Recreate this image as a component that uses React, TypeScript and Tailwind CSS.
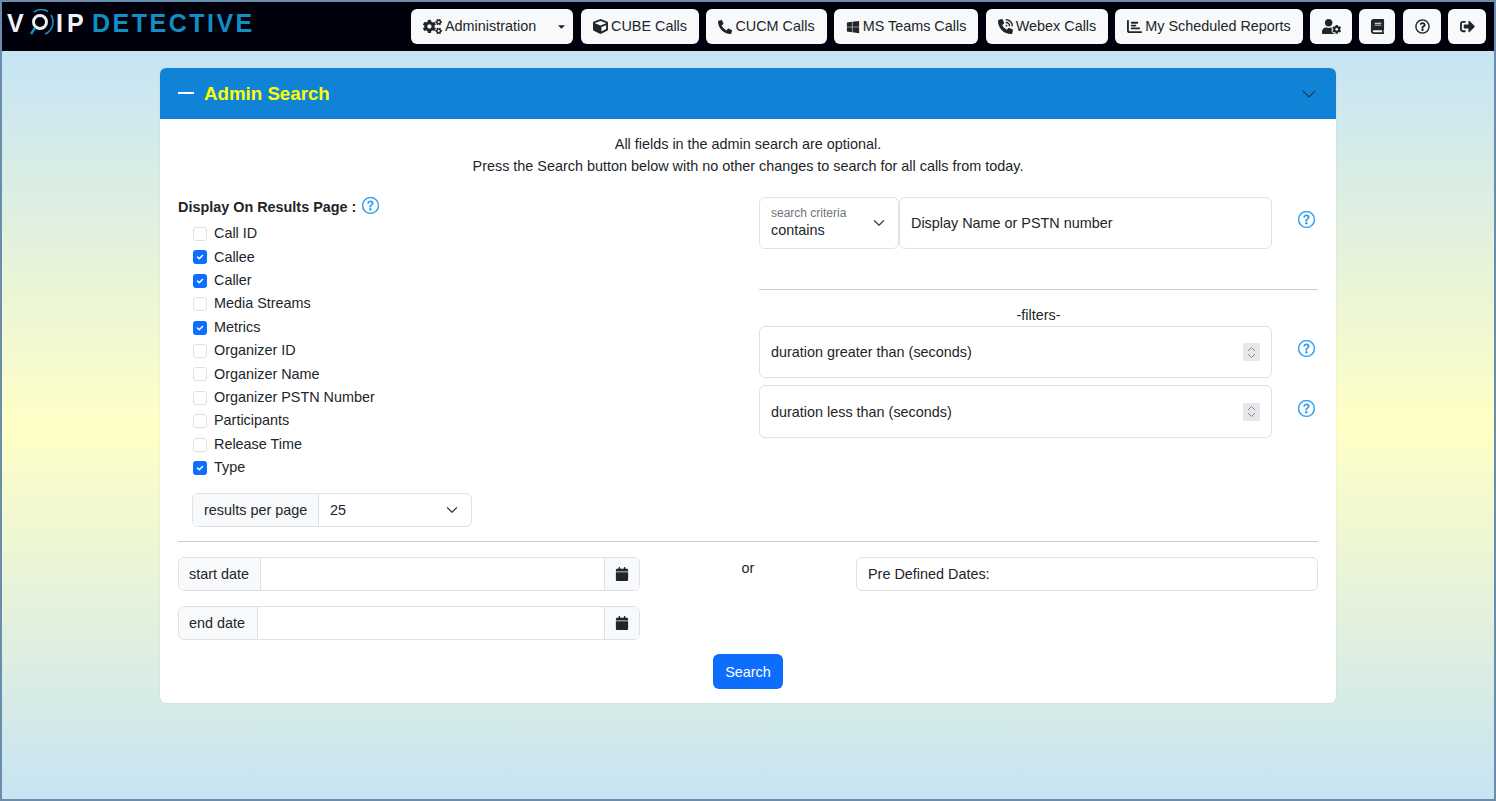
import React from 'react';
import { FaCogs, FaCube, FaPhoneAlt, FaWindows, FaUserCog, FaBook, FaRegQuestionCircle, FaSignOutAlt, FaCaretDown } from 'react-icons/fa';
import { FaChartBar, FaCalendar, FaPhoneVolume } from 'react-icons/fa6';
import { BsQuestionCircle, BsChevronDown } from 'react-icons/bs';

const NAV_BTN = 'h-[35px] bg-[#f8f9fa] rounded-md flex items-center justify-center text-[14.4px] text-[#212529] shrink-0';

const columns = [
  { label: 'Call ID', on: false },
  { label: 'Callee', on: true },
  { label: 'Caller', on: true },
  { label: 'Media Streams', on: false },
  { label: 'Metrics', on: true },
  { label: 'Organizer ID', on: false },
  { label: 'Organizer Name', on: false },
  { label: 'Organizer PSTN Number', on: false },
  { label: 'Participants', on: false },
  { label: 'Release Time', on: false },
  { label: 'Type', on: true },
];

function Logo() {
  return (
    <div className="flex items-center h-full pl-[5px] pb-[7px] font-bold text-[25px] leading-none select-none">
      <span className="text-[#f2f2f2] w-[21px]">V</span>
      <svg width="30" height="34" viewBox="0 0 30 34" className="mt-[6px] shrink-0">
        <circle cx="12" cy="13" r="6.5" fill="none" stroke="#eeeeee" strokeWidth="3" />
        <path d="M6 3 A12.5 12.5 0 0 1 20 2.5" fill="none" stroke="#1390c4" strokeWidth="1.6" />
        <path d="M23 6 A13 13 0 0 1 17 25" fill="none" stroke="#1390c4" strokeWidth="1.6" />
        <path d="M7 19 L3 25" fill="none" stroke="#1390c4" strokeWidth="2.4" />
      </svg>
      <span className="text-[#f2f2f2] tracking-[4px] ml-[-2px] w-[38px]">IP</span>
      <span className="text-[#0f8fc4] tracking-[2.5px] ml-[-2px]">DETECTIVE</span>
    </div>
  );
}

function Navbar() {
  return (
    <nav className="h-[49px] bg-[#00000c] flex items-center justify-between shrink-0">
      <Logo />
      <div className="flex items-center mr-[8px]">
        <div className={`${NAV_BTN} w-[162px] justify-start pl-[12px] gap-[3px]`}>
          <FaCogs size={19} />
          <span>Administration</span>
          <FaCaretDown size={11} className="ml-[17px]" />
        </div>
        <div className={`${NAV_BTN} w-[118px] gap-[3px] ml-[8px]`}><FaCube size={15} />CUBE Calls</div>
        <div className={`${NAV_BTN} w-[121px] gap-[3px] ml-[7px]`}><FaPhoneAlt size={14} />CUCM Calls</div>
        <div className={`${NAV_BTN} w-[144px] gap-[3px] ml-[7px]`}><FaWindows size={14} />MS Teams Calls</div>
        <div className={`${NAV_BTN} w-[122px] gap-[3px] ml-[8px]`}><FaPhoneVolume size={15} />Webex Calls</div>
        <div className={`${NAV_BTN} w-[188px] gap-[3px] ml-[7px]`}><FaChartBar size={15} />My Scheduled Reports</div>
        <div className={`${NAV_BTN} w-[42px] ml-[7px]`}><FaUserCog size={19} /></div>
        <div className={`${NAV_BTN} w-[36px] ml-[7px]`}><FaBook size={15} /></div>
        <div className={`${NAV_BTN} w-[38px] ml-[8px]`}><FaRegQuestionCircle size={15} /></div>
        <div className={`${NAV_BTN} w-[38px] ml-[7px]`}><FaSignOutAlt size={15} /></div>
      </div>
    </nav>
  );
}

function Help({ className = '' }: { className?: string }) {
  return <BsQuestionCircle size={17} className={`text-[#2b9bf0] stroke-[0.4px] shrink-0 ${className}`} />;
}

function Check({ label, on }: { label: string; on: boolean }) {
  return (
    <label className="flex items-center h-[23.4px] pl-[15px]">
      {on ? (
        <span className="w-[14px] h-[14px] rounded-[3px] bg-[#0d6efd] flex items-center justify-center">
          <svg width="10" height="10" viewBox="0 0 20 20">
            <path d="M5 10l3.5 3.5L15 7" fill="none" stroke="#fff" strokeWidth="3" strokeLinecap="round" strokeLinejoin="round" />
          </svg>
        </span>
      ) : (
        <span className="w-[14px] h-[14px] rounded-[3px] border border-[#dee2e6] bg-white" />
      )}
      <span className="ml-[7px] text-[14.4px] text-[#212529]">{label}</span>
    </label>
  );
}

function Spinner() {
  return (
    <div className="w-[17px] h-[18px] bg-[#e6e6eb] flex flex-col items-center justify-center gap-[1px] shrink-0">
      <svg width="9" height="6" viewBox="0 0 9 6"><path d="M1 5l3.5-3.5L8 5" fill="none" stroke="#8a8a8f" strokeWidth="1" /></svg>
      <svg width="9" height="6" viewBox="0 0 9 6"><path d="M1 1l3.5 3.5L8 1" fill="none" stroke="#8a8a8f" strokeWidth="1" /></svg>
    </div>
  );
}

function NumberField({ label, className = '' }: { label: string; className?: string }) {
  return (
    <div className={`flex items-center gap-[26px] ${className}`}>
      <div className="w-[513px] shrink-0 border border-[#dee2e6] rounded-md flex items-center justify-between pl-[11px] pr-[11px] h-full text-[14.4px] text-[#212529]">
        <span className="pt-[2px]">{label}</span>
        <Spinner />
      </div>
      <Help className="mt-[-7px]" />
    </div>
  );
}

function DateField({ label, labelWidth, className = '' }: { label: string; labelWidth: string; className?: string }) {
  return (
    <div className={`flex w-[462px] h-[34px] border border-[#dee2e6] rounded-md overflow-hidden text-[14.4px] text-[#212529] ${className}`}>
      <div className={`${labelWidth} bg-[#f8f9fa] border-r border-[#dee2e6] flex items-center pl-[10px] pt-[2px]`}>{label}</div>
      <div className="flex-1" />
      <div className="w-[35px] bg-[#f8f9fa] border-l border-[#dee2e6] flex items-center justify-center">
        <FaCalendar size={14} className="text-[#212529]" />
      </div>
    </div>
  );
}

function SearchCard() {
  return (
    <section className="w-[1176px] mx-auto mt-[17px] bg-white rounded-md shadow-[0_0_1px_rgba(0,0,0,0.2)]">
      <header className="h-[51px] bg-[#1183d6] rounded-t-md flex items-center justify-between pl-[18px] pr-[19px]">
        <div className="flex items-center">
          <span className="w-[16px] h-[2px] bg-white" />
          <h1 className="ml-[10px] pt-[2px] text-[18.72px] font-bold text-[#ffff00]">Admin Search</h1>
        </div>
        <BsChevronDown size={16} className="text-[#212529]" />
      </header>

      <div className="px-[18px] pt-[14px] pb-[14px]">
        <div className="text-center text-[14.4px] leading-[22px] text-[#212529]">
          <p>All fields in the admin search are optional.</p>
          <p>Press the Search button below with no other changes to search for all calls from today.</p>
        </div>

        <div className="flex mt-[20px]">
          <div className="w-[581px]">
            <div className="flex items-center h-[20px] text-[14.4px] font-bold text-[#212529]">
              <span className="pt-[2px]">Display On Results Page :</span>
              <Help className="ml-[6px] mt-[-3px] font-normal" />
            </div>
            <div className="mt-[5.4px]">
              {columns.map(c => <Check key={c.label} label={c.label} on={c.on} />)}
            </div>
            <div className="flex w-[280px] h-[34px] ml-[14px] mt-[13.6px] border border-[#dee2e6] rounded-md overflow-hidden text-[14.4px] text-[#212529]">
              <div className="w-[126px] bg-[#f8f9fa] border-r border-[#dee2e6] flex items-center pl-[11px] pt-[2px]">results per page</div>
              <div className="flex-1 flex items-center justify-between pl-[11px] pr-[13px]">
                <span className="pt-[2px]">25</span>
                <BsChevronDown size={12} className="stroke-[0.8px]" />
              </div>
            </div>
          </div>

          <div className="w-[559px]">
            <div className="flex items-center gap-[26px]">
              <div className="flex w-[513px] h-[52px] shrink-0 text-[#212529]">
                <div className="w-[140px] border border-[#dee2e6] rounded-md flex items-center justify-between pl-[11px] pr-[13px]">
                  <div className="flex flex-col">
                    <span className="text-[12px] leading-[15px] text-[#6c757d]">search criteria</span>
                    <span className="text-[14.4px] leading-[19px]">contains</span>
                  </div>
                  <BsChevronDown size={12} className="stroke-[0.8px]" />
                </div>
                <div className="flex-1 border border-[#dee2e6] rounded-md flex items-center pl-[11px] pt-[2px] text-[14.4px]">
                  Display Name or PSTN number
                </div>
              </div>
              <Help className="mt-[-7px]" />
            </div>
            <hr className="mt-[40px] border-[#cccccc]" />
            <p className="mt-[16px] w-[559px] text-center text-[14.4px] leading-[18px] text-[#212529]">-filters-</p>
            <NumberField className="mt-[2px] h-[52px]" label="duration greater than (seconds)" />
            <NumberField className="mt-[7px] h-[53px]" label="duration less than (seconds)" />
          </div>
        </div>

        <hr className="mt-[14px] border-[#cccccc]" />

        <div className="flex mt-[15px]">
          <div>
            <DateField label="start date" labelWidth="w-[82px]" />
            <DateField label="end date" labelWidth="w-[79px]" className="mt-[15px]" />
          </div>
          <p className="w-[216px] text-center text-[14.4px] leading-[22px] text-[#212529]">or</p>
          <div className="w-[462px] h-[34px] border border-[#dee2e6] rounded-md flex items-center pl-[11px] pt-[2px] text-[14.4px] text-[#212529]">
            Pre Defined Dates:
          </div>
        </div>

        <div className="flex justify-center mt-[14px]">
          <button className="w-[70px] h-[35px] pt-[2px] bg-[#0d6efd] rounded-md text-white text-[14.4px]">Search</button>
        </div>
      </div>
    </section>
  );
}

export default function App() {
  return (
    <div className="h-screen flex flex-col overflow-hidden border-2 border-[#6a8dab] font-['Liberation_Sans',Arial,sans-serif]">
      <Navbar />
      <main className="flex-1 bg-[linear-gradient(to_bottom,#c6e4f5,#ffffc6_50%,#c8e4f3)]">
        <SearchCard />
      </main>
    </div>
  );
}
